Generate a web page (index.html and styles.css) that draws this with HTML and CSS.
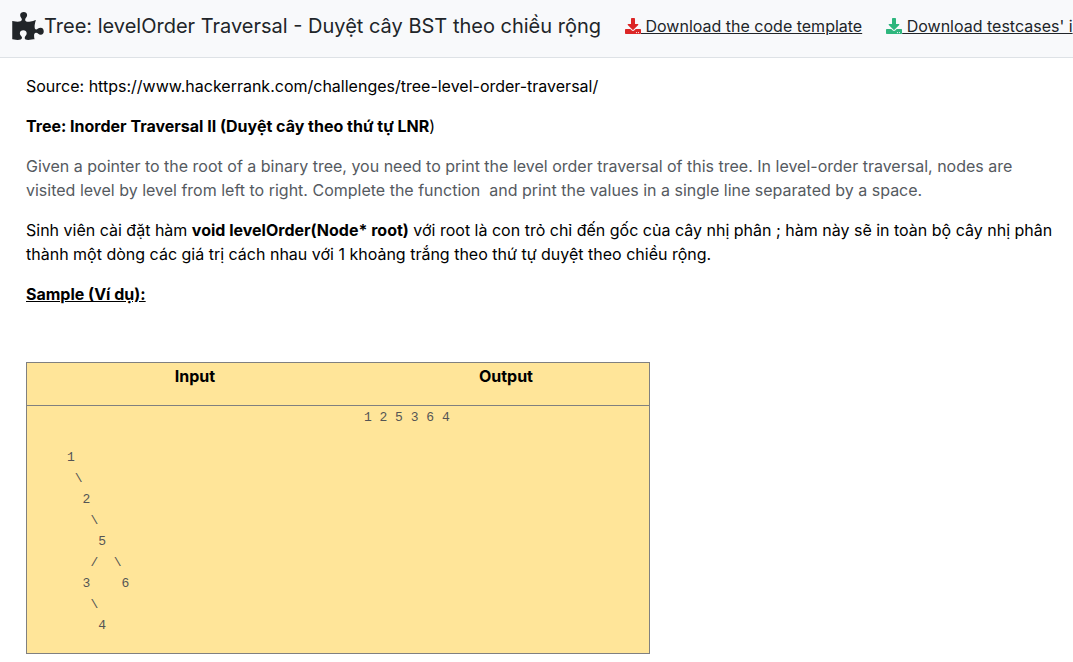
FILE: index.html
```html
<!DOCTYPE html>
<html lang="vi">
<head>
<meta charset="utf-8">
<meta name="viewport" content="width=device-width, initial-scale=1">
<title>Tree: levelOrder Traversal</title>
<link rel="stylesheet" href="styles.css">
</head>
<body>
<svg class="sprite" aria-hidden="true">
  <symbol id="download" viewBox="0 0 512 512"><path d="M216 0h80c13.300 0 24 10.700 24 24v168h87.700c17.800 0 26.700 21.500 14.100 34.100L269.700 378.300c-7.500 7.500-19.800 7.500-27.300 0L90.100 226.100c-12.600-12.600-3.700-34.100 14.100-34.100H192V24c0-13.300 10.700-24 24-24zm296 376v112c0 13.300-10.700 24-24 24H24c-13.300 0-24-10.700-24-24V376c0-13.300 10.700-24 24-24h146.700l49 49c20.100 20.100 52.500 20.100 72.600 0l49-49H488c13.300 0 24 10.700 24 24zm-124 88c0-11-9-20-20-20s-20 9-20 20 9 20 20 20 20-9 20-20zm64 0c0-11-9-20-20-20s-20 9-20 20 9 20 20 20 20-9 20-20z"/></symbol>
</svg>
<header class="topbar">
  <h1 class="title">
    <svg class="puzzle" viewBox="0 0 576 512" aria-hidden="true"><path d="M519.442 288.651c-41.519 0-59.500 31.593-82.058 31.593C377.409 320.244 432 144 432 144s-196.288 80-196.288-3.297c0-35.827 36.288-46.250 36.288-85.985C272 19.216 243.885 0 210.539 0c-34.654 0-66.366 18.891-66.366 56.346 0 41.364 31.711 59.277 31.711 81.750C175.885 207.719 0 166.758 0 166.758v333.237s178.635 41.047 178.635-28.662c0-22.473-40-40.107-40-81.471 0-37.456 29.250-56.346 63.577-56.346 33.673 0 61.788 19.216 61.788 54.717 0 39.735-36.288 50.158-36.288 85.985 0 60.803 129.675 25.730 181.230 25.730 0 0-34.725-120.101 25.827-120.101 35.962 0 46.423 36.152 86.308 36.152C556.712 416 576 387.990 576 354.443c0-34.199-18.962-65.792-56.558-65.792z"/></svg>
    <span>Tree: levelOrder Traversal - Duyệt cây BST theo chiều rộng</span>
  </h1>
  <a class="download" href="#template"><svg class="icon icon-red" aria-hidden="true"><use href="#download"/></svg> Download the code template</a>
  <a class="download" href="#testcases"><svg class="icon icon-green" aria-hidden="true"><use href="#download"/></svg> Download testcases' i</a>
</header>
<main class="content">
  <p>Source: https://www.hackerrank.com/challenges/tree-level-order-traversal/</p>
  <p><strong>Tree: Inorder Traversal II (Duyệt cây theo thứ tự LNR</strong>)</p>
  <p class="muted">Given a pointer to the root of a binary tree, you need to print the level order traversal of this tree. In level-order traversal, nodes are visited level by level from left to right. Complete the function&nbsp; and print the values in a single line separated by a space.</p>
  <p>Sinh viên cài đặt hàm <strong>void levelOrder(Node* root)</strong> với root là con trỏ chỉ đến gốc của cây nhị phân ; hàm này sẽ in toàn bộ cây nhị phân thành một dòng các giá trị cách nhau với 1 khoảng trắng theo thứ tự duyệt theo chiều rộng.</p>
  <p><strong><u>Sample (Ví dụ):</u></strong></p>
  <table class="sample">
    <thead>
      <tr><th class="col-input" scope="col">Input</th><th scope="col">Output</th></tr>
    </thead>
    <tbody>
      <tr>
        <td><pre class="tree">     1
      \
       2
        \
         5
        /  \
       3    6
        \
         4</pre></td>
        <td><pre>1 2 5 3 6 4</pre></td>
      </tr>
    </tbody>
  </table>
</main>
</body>
</html>
```
FILE: styles.css
```css
* {
  box-sizing: border-box;
}

body {
  margin: 0;
  background: #fff;
  color: #000;
  font-family: Inter, "Noto Sans", sans-serif;
  font-size: 16px;
  line-height: 24px;
}

.sprite {
  display: none;
}

.topbar {
  display: flex;
  align-items: center;
  gap: 24px;
  padding: 12px 12px 17px;
  overflow: hidden;
  white-space: nowrap;
  background: #f8f9fb;
  border-bottom: 1px solid #dee2e6;
  color: #212529;
}

.title {
  display: flex;
  flex: none;
  align-items: center;
  margin: 0;
  font-size: 20px;
  font-weight: 400;
  line-height: 28px;
}

.puzzle {
  width: 32px;
  height: 28px;
  fill: #212529;
}

.download {
  flex: none;
  color: #212529;
  text-decoration: underline;
}

.icon {
  width: 16px;
  height: 16px;
  vertical-align: -2px;
}

.icon-red {
  fill: #dc2626;
}

.icon-green {
  fill: #2eb67d;
}

.content {
  padding: 16px 16px 8px 26px;
}

p {
  margin: 0 0 16px;
}

.muted {
  color: #555a5f;
}

.sample {
  width: 624px;
  max-width: 100%;
  margin-top: 56px;
  border: 1px solid #808080;
  border-collapse: collapse;
  table-layout: fixed;
  background: #ffe599;
}

.sample tr {
  border-bottom: 1px solid #808080;
}

.sample th {
  padding: 1px 1px 17px;
  font-weight: 700;
}

.col-input {
  width: 54%;
}

.sample td {
  padding: 1px;
  vertical-align: top;
}

pre {
  margin: 0 0 16px;
  color: #555;
  font-family: "Liberation Mono", monospace;
  font-size: 13px;
  line-height: 21px;
}

.tree {
  margin-top: 40px;
}
```
